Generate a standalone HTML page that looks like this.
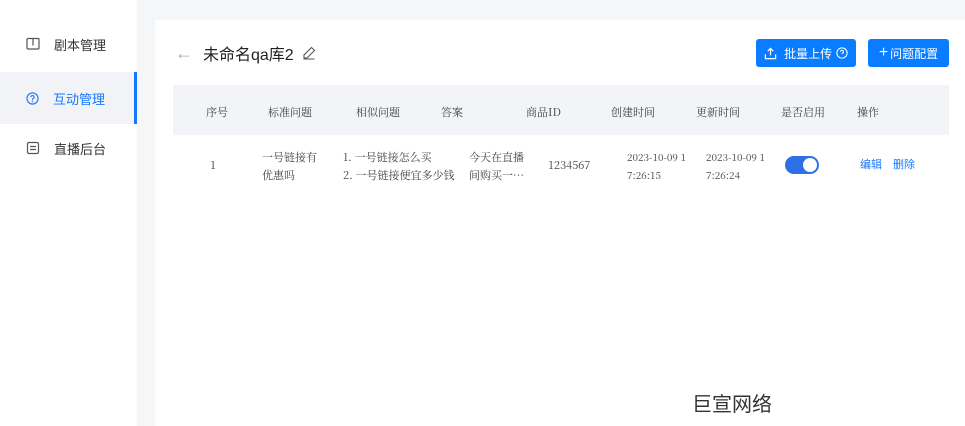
<!DOCTYPE html>
<html><head><meta charset="utf-8"><style>
*{margin:0;padding:0;box-sizing:border-box}
body{width:965px;height:426px;background:#f5f6f8;position:relative;overflow:hidden;font-family:"Liberation Sans","Noto Sans CJK SC",sans-serif;color:#333}
.side{position:absolute;left:0;top:0;width:137px;height:426px;background:#fff}
.item{position:absolute;left:0;width:137px;height:52px;display:flex;align-items:center;padding-left:26px;font-size:13px;color:#333}
.item svg{margin-right:14px}
.active{background:#f2f3f7;color:#1677ff}
.active:after{content:"";position:absolute;right:0;top:0;width:3px;height:52px;background:#1677ff}
.main{position:absolute;left:155px;top:20px;width:810px;height:406px;background:#fff}
.title{position:absolute;left:175px;top:41px;font-size:16px;color:#222;display:flex;align-items:center}
.btn{position:absolute;top:39px;height:28px;background:#0a7cff;color:#fff;border-radius:3px;font-size:12px;display:flex;align-items:center;justify-content:center}
.thead{position:absolute;left:173px;top:85px;width:776px;height:50px;background:#f3f4f8}
.s{font-family:"Noto Serif CJK SC","Liberation Serif",serif;font-size:11px;color:#444;position:absolute;white-space:nowrap;line-height:18px}
.h{top:103px}
.link{color:#1677ff;font-family:"Liberation Sans","Noto Sans CJK SC",sans-serif}
</style></head><body>
<div class="side">
 <div class="item" style="top:18px"><svg width="14" height="14" viewBox="0 0 14 14" fill="none" stroke="#555" stroke-width="1.2"><rect x="1" y="1.5" width="12" height="10.5" rx="1"/><path d="M7 1.5v7"/></svg>剧本管理</div>
 <div class="item active" style="top:72px"><svg width="13" height="13" viewBox="0 0 14 14" fill="none" stroke="#1677ff" stroke-width="1.2"><circle cx="7" cy="7" r="6"/><path d="M5.3 5.5a1.7 1.7 0 1 1 2.3 1.6c-.5.2-.6.6-.6 1v.4"/><circle cx="7" cy="10.2" r=".3"/></svg>互动管理</div>
 <div class="item" style="top:122px"><svg width="14" height="14" viewBox="0 0 14 14" fill="none" stroke="#555" stroke-width="1.2"><rect x="1.5" y="1.5" width="11" height="11" rx="1.5"/><path d="M4 5.5h6M4 8.5h6"/></svg>直播后台</div>
</div>
<div class="main"></div>
<div class="title"><span style="color:#aaa;font-size:18px;margin-right:10px">←</span>未命名qa库2<svg style="margin-left:8px" width="14" height="14" viewBox="0 0 14 14" fill="none" stroke="#555" stroke-width="1.1"><path d="M9.5 1.5l3 3-7.5 7.5H2v-3z M1.5 13h11"/></svg></div>
<div class="btn" style="left:756px;width:100px"><svg width="13" height="13" viewBox="0 0 14 14" fill="none" stroke="#fff" stroke-width="1.3"><path d="M7 9V1.5M4 4.5l3-3 3 3M1.5 8v4.5h11V8"/></svg>&nbsp;&nbsp;批量上传&nbsp;<svg width="12" height="12" viewBox="0 0 14 14" fill="none" stroke="#fff" stroke-width="1.2"><circle cx="7" cy="7" r="6"/><path d="M5.3 5.5a1.7 1.7 0 1 1 2.3 1.6c-.5.2-.6.6-.6 1v.4"/></svg></div>
<div class="btn" style="left:868px;width:81px"><span style="font-size:16px;margin-right:2px">+</span>问题配置</div>
<div class="thead"></div>
<div class="s h" style="left:206px">序号</div>
<div class="s h" style="left:268px">标准问题</div>
<div class="s h" style="left:356px">相似问题</div>
<div class="s h" style="left:441px">答案</div>
<div class="s h" style="left:526px">商品ID</div>
<div class="s h" style="left:611px">创建时间</div>
<div class="s h" style="left:696px">更新时间</div>
<div class="s h" style="left:781px">是否启用</div>
<div class="s h" style="left:857px">操作</div>
<div class="s" style="left:210px;top:156px">1</div>
<div class="s" style="left:262px;top:148px">一号链接有<br>优惠吗</div>
<div class="s" style="left:343px;top:148px">1. 一号链接怎么买<br>2. 一号链接便宜多少钱</div>
<div class="s" style="left:469px;top:148px">今天在直播<br>间购买一…</div>
<div class="s" style="left:548px;top:156px">1234567</div>
<div class="s" style="left:627px;top:148px;font-size:10px">2023-10-09 1<br>7:26:15</div>
<div class="s" style="left:706px;top:148px;font-size:10px">2023-10-09 1<br>7:26:24</div>
<div style="position:absolute;left:785px;top:156px;width:34px;height:18px;border-radius:9px;background:#2f6fe8"><div style="position:absolute;right:2px;top:2px;width:14px;height:14px;border-radius:50%;background:#fff"></div></div>
<div class="s link" style="left:860px;top:156px">编辑</div>
<div class="s link" style="left:893px;top:156px">删除</div>
<div style="position:absolute;left:692px;top:388px;font-size:20px;color:#333">巨宣网络</div>
</body></html>
